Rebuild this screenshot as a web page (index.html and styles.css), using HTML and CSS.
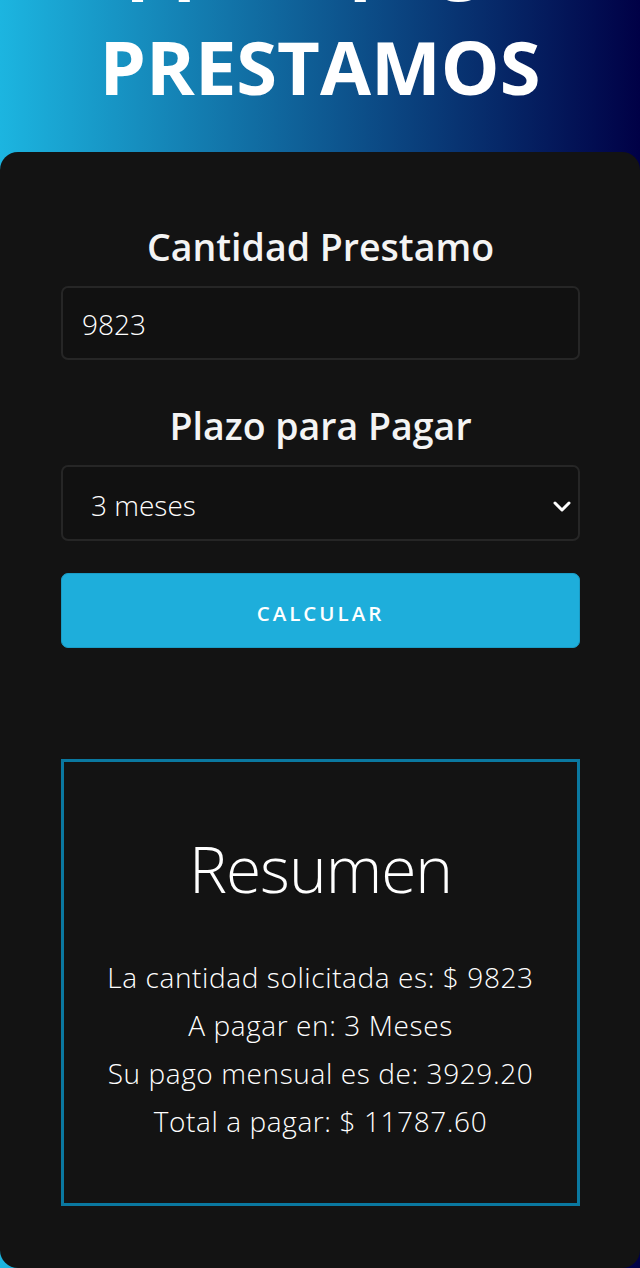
FILE: index.html
```html
<!DOCTYPE html>
<html lang="es">
<head>
<meta charset="utf-8">
<title>Prestamos</title>
<link rel="stylesheet" href="styles.css">
</head>
<body>
  <header class="hero">
    <h1 class="hero-title">App de pagos<br>PRESTAMOS</h1>
  </header>
  <main class="card">
    <form class="loan-form">
      <label class="field-label" for="cantidad">Cantidad Prestamo</label>
      <input class="field-input" id="cantidad" type="text" value="9823">
      <label class="field-label second" for="plazo">Plazo para Pagar</label>
      <div class="select-wrap">
        <select class="field-select" id="plazo">
          <option>3 meses</option>
          <option>6 meses</option>
          <option>12 meses</option>
        </select>
        <svg class="chevron" width="18" height="11" viewBox="0 0 18 11"><path d="M2 2 L9 9 L16 2" fill="none" stroke="#ffffff" stroke-width="3" stroke-linecap="round" stroke-linejoin="round"/></svg>
      </div>
      <button class="btn-primary" type="button">Calcular</button>
    </form>
    <section class="summary">
      <h2 class="summary-title">Resumen</h2>
      <p class="summary-line">La cantidad solicitada es: $ 9823</p>
      <p class="summary-line">A pagar en: 3 Meses</p>
      <p class="summary-line">Su pago mensual es de: 3929.20</p>
      <p class="summary-line">Total a pagar: $ 11787.60</p>
    </section>
  </main>
</body>
</html>
```
FILE: styles.css
```css
* { box-sizing: border-box; }
html, body { margin: 0; padding: 0; }
body {
  background: linear-gradient(to right, #1cb5e0, #000046);
  font-family: "Open Sans", "Noto Sans", sans-serif;
  color: #ffffff;
  min-height: 1268px;
}
.hero {
  text-align: center;
}
.hero-title {
  margin: -100px 0 30px;
  font-size: 74px;
  line-height: 111px;
  font-weight: 700;
  color: #ffffff;
  letter-spacing: 0;
}
.card {
  background: #131313;
  border-radius: 18px;
  padding: 73px 60px 62px 61px;
}
.loan-form {
  display: flex;
  flex-direction: column;
}
.field-label {
  display: block;
  text-align: center;
  font-size: 37.5px;
  line-height: 43px;
  font-weight: 600;
  color: #f4f4f4;
  margin-bottom: 18px;
}
.field-label.second {
  margin-top: 44px;
}
.field-input,
.field-select {
  width: 100%;
  background: #111111;
  border: 2px solid #262626;
  border-radius: 7px;
  color: #ffffff;
  font-family: "Open Sans", "Noto Sans", sans-serif;
  font-weight: 300;
  font-size: 28px;
  outline: none;
}
.field-input {
  height: 74px;
  padding: 2px 19px 0;
}
.select-wrap {
  position: relative;
}
.field-select {
  height: 76px;
  padding: 3px 28px 0;
  appearance: none;
  -webkit-appearance: none;
}
.chevron {
  position: absolute;
  right: 9px;
  top: 36px;
}
.btn-primary {
  margin-top: 32px;
  height: 75px;
  padding-top: 5px;
  background: #1eaedb;
  border: 1px solid #1a9cc6;
  border-radius: 7px;
  color: #ffffff;
  font-family: "Open Sans", "Noto Sans", sans-serif;
  font-size: 20.5px;
  font-weight: 600;
  letter-spacing: 3px;
  text-transform: uppercase;
}
.summary {
  margin-top: 111px;
  border: 3px solid #0a78a0;
  padding: 65px 0 58px;
  text-align: center;
}
.summary-title {
  margin: 0 0 42px;
  font-size: 64px;
  line-height: 84px;
  font-weight: 300;
  color: #ffffff;
  letter-spacing: -1px;
}
.summary-line {
  margin: 0;
  font-size: 28px;
  line-height: 48px;
  font-weight: 300;
  letter-spacing: 0.6px;
  color: #ffffff;
}
```
